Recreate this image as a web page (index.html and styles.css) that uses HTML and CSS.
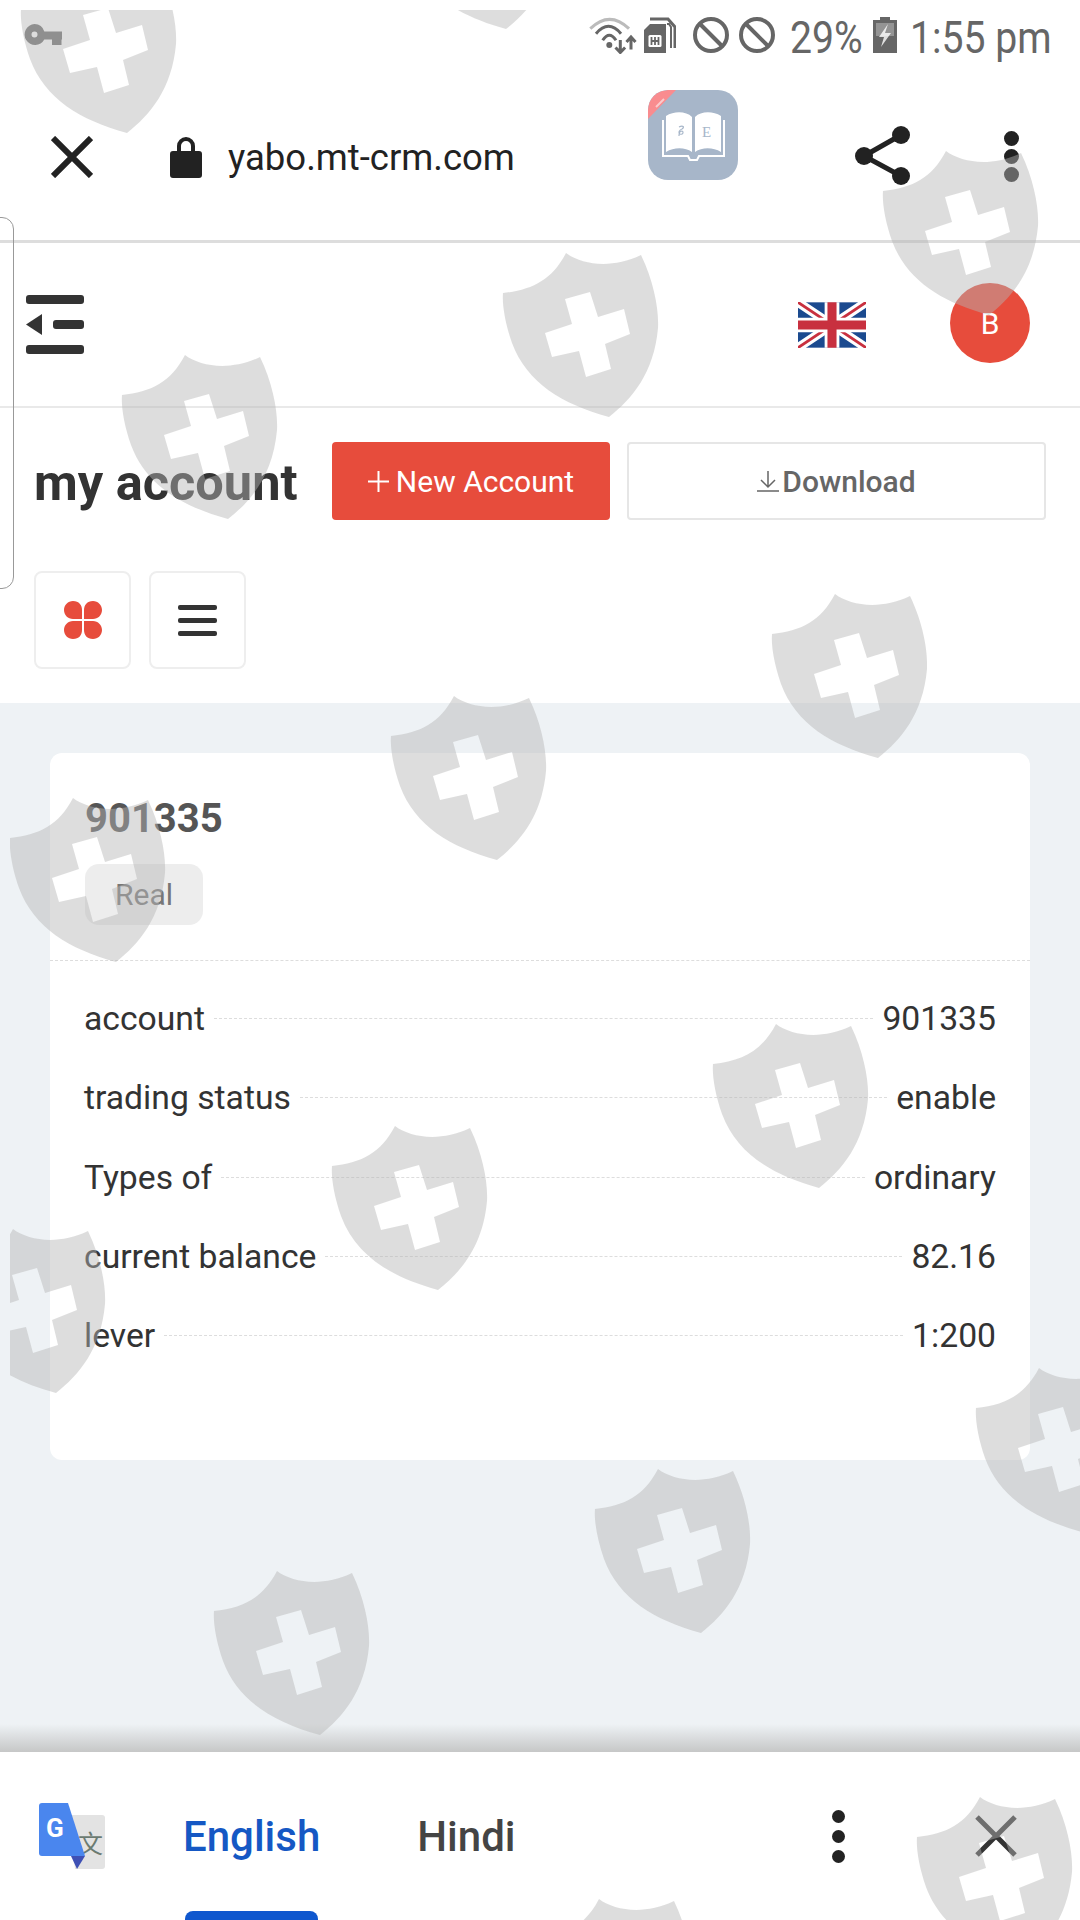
FILE: index.html
```html
<!DOCTYPE html>
<html lang="en">
<head>
    <meta charset="UTF-8">
    <meta name="viewport" content="width=device-width, initial-scale=1.0">
    <title>my account</title>
    <link rel="stylesheet" href="styles.css">
</head>
<body>
    <div class="phone">
        <!-- Android status bar -->
        <div class="status-bar">
            <svg class="key-icon" viewBox="0 0 38 21"><path fill="#707070" fill-rule="evenodd" d="M10.500 0a10.500 10.500 0 0 1 9.800 7.500H38v8h-.5V21H28v-5.500h-7.700A10.500 10.500 0 1 1 10.500 0zm0 7.500a3 3 0 1 0 0 6 3 3 0 0 0 0-6z"/></svg>
            <div class="status-right">
                <svg class="wifi-icon" viewBox="0 0 48 37" fill="none">
                    <path stroke="#bbb" stroke-width="3" d="M1.300 11.700Q20.600-7 40 11.700"/>
                    <path stroke="#666" stroke-width="3" d="M7 16.700Q19.500 2 32 16.700M13.700 23.300Q20.300 13 27 23.300"/>
                    <circle cx="20.300" cy="28" r="3" fill="#666"/>
                    <path stroke="#666" stroke-width="3" d="M31.300 23v12M26.500 30.500l4.800 5 4.800-5M42 32.500V20M37.500 25l4.500-5 4.500 5"/>
                </svg>
                <svg class="sim-icon" viewBox="0 0 33 36">
                    <path fill="#666" d="M7 7h16v29H1V13z"/>
                    <path fill="none" stroke="#666" stroke-width="3" d="M7 2h18l7 8v21"/>
                    <path fill="none" stroke="#666" stroke-width="2" d="M24 7h2l2 3v21"/>
                    <rect x="5.500" y="18" width="13" height="12" rx="1.500" fill="#fff"/>
                    <path stroke="#666" stroke-width="1.800" d="M8.500 20v8M15.500 20v8M8.500 24h7M12 20v8"/>
                </svg>
                <svg class="block-icon" viewBox="0 0 36 36" fill="none" stroke="#666" stroke-width="4"><circle cx="18" cy="18" r="16"/><path d="M7 7l22 22"/></svg>
                <svg class="block-icon block-last" viewBox="0 0 36 36" fill="none" stroke="#666" stroke-width="4"><circle cx="18" cy="18" r="16"/><path d="M7 7l22 22"/></svg>
                <span class="status-text status-pct"><span>29%</span></span>
                <svg class="battery-icon" viewBox="0 0 24 36">
                    <path fill="#666" d="M7 0h10v3h7v33H0V3h7z"/>
                    <path fill="#fff" opacity=".3" d="M3 6h18v13H3z"/>
                    <path fill="#fff" opacity=".8" d="M15 7L6 20h5l-3 10 10-14h-6z"/>
                </svg>
                <span class="status-text status-time"><span>1:55 pm</span></span>
            </div>
        </div>

        <!-- custom tab toolbar -->
        <div class="toolbar">
            <svg class="close-icon" viewBox="0 0 42 42" fill="none" stroke="#222" stroke-width="6"><path d="M2 2l38 38M40 2L2 40"/></svg>
            <svg class="lock-icon" viewBox="0 0 32 42"><path fill="#222" d="M7 15V10a9 9 0 0 1 18 0v5h4a3 3 0 0 1 3 3v21a3 3 0 0 1-3 3H3a3 3 0 0 1-3-3V18a3 3 0 0 1 3-3zm4 0h10V10a5 5 0 0 0-10 0z"/></svg>
            <span class="url">yabo.mt-crm.com</span>
            <svg class="dict-icon" viewBox="0 0 90 90">
                <path fill="#f98c8f" d="M0 29V20A20 20 0 0 1 20 0h8z"/>
                <path stroke="#fff" stroke-width="2" opacity=".55" d="M8 17l8-8"/>
                <path fill="#fff" d="M18 26c8-5 20-5 26 1v35c-7-5-18-5-26 0zM47 27c6-6 18-6 26-1v36c-8-5-19-5-26 0z"/>
                <path fill="none" stroke="#fff" stroke-width="2" d="M15 30v36h25l2 4h7l2-4h25V30"/>
                <path fill="none" stroke="#a7b6c9" stroke-width="1.200" d="M31 37c4-2 6 0 3 2-3 1-4 4-2 5 3 1 4-2 2-3-2 0-3 2-3 5"/>
                <text x="54" y="47" class="dict-letter">E</text>
            </svg>
            <svg class="share-icon" viewBox="0 0 55 59"><path fill="none" stroke="#222" stroke-width="5" d="M46 9L9 30l37 20"/><circle cx="46" cy="9" r="9" fill="#222"/><circle cx="9" cy="30" r="9" fill="#222"/><circle cx="46" cy="50" r="9" fill="#222"/></svg>
            <div class="dots dots-big"><i></i><i></i><i></i></div>
        </div>

        <!-- site -->
        <div class="site">
            <div class="drawer-tab"></div>
            <div class="site-header">
                <svg class="back-menu" viewBox="0 0 58 60" fill="#333">
                    <rect x="0" y="0" width="58" height="9" rx="3"/>
                    <rect x="27" y="25" width="31" height="9" rx="3"/>
                    <path d="M16 19v21L0 29.500z"/>
                    <rect x="0" y="50" width="58" height="9" rx="3"/>
                </svg>
                <svg class="flag" viewBox="0 0 60 40">
                    <rect width="60" height="40" fill="#1b4a8f"/>
                    <path stroke="#fff" stroke-width="8" d="M0 0l60 40M60 0L0 40"/>
                    <path stroke="#c8303f" stroke-width="2.500" d="M0 0l60 40M60 0L0 40"/>
                    <path stroke="#fff" stroke-width="13" d="M30 0v40M0 20h60"/>
                    <path stroke="#c8303f" stroke-width="8" d="M30 0v40M0 20h60"/>
                </svg>
                <div class="avatar">B</div>
            </div>
            <div class="title-row">
                <h1>my account</h1>
                <button class="btn btn-red">
                    <svg class="plus-icon" viewBox="0 0 21 21" fill="none" stroke="#fff" stroke-width="2"><path d="M10.500 0v21M0 10.500h21"/></svg>New Account
                </button>
                <button class="btn btn-plain">
                    <svg class="dl-icon" viewBox="0 0 22 22" fill="none" stroke="#666" stroke-width="1.500"><path d="M11 1v15M4 10l7 7 7-7M0 21h22"/></svg>Download
                </button>
            </div>
            <div class="view-row">
                <div class="view-btn">
                    <svg class="grid-icon" viewBox="0 0 38 38" fill="#e74c3c">
                        <path d="M9 0c6 0 9 4 9 9v9H9c-5 0-9-4-9-9s4-9 9-9zM29 0c5 0 9 4 9 9s-4 9-9 9h-9V9c0-5 3-9 9-9zM9 38c-5 0-9-4-9-9s4-9 9-9h9v9c0 5-3 9-9 9zM29 38c-6 0-9-4-9-9v-9h9c5 0 9 4 9 9s-4 9-9 9z"/>
                    </svg>
                </div>
                <div class="view-btn">
                    <div class="list-icon"><i></i><i></i><i></i></div>
                </div>
            </div>
            <div class="content">
                <div class="card">
                    <div class="card-head">
                        <h2>901335</h2>
                        <span class="badge">Real</span>
                    </div>
                    <div class="card-body">
                        <div class="row"><span>account</span><em></em><span>901335</span></div>
                        <div class="row"><span>trading status</span><em></em><span>enable</span></div>
                        <div class="row"><span>Types of</span><em></em><span>ordinary</span></div>
                        <div class="row"><span>current balance</span><em></em><span>82.16</span></div>
                        <div class="row"><span>lever</span><em></em><span>1:200</span></div>
                    </div>
                </div>
            </div>
        </div>

        <!-- translate bar -->
        <div class="translate-bar">
            <svg class="gt-logo" viewBox="0 0 66 66">
                <path fill="#e3e3e3" d="M30 12h33a3 3 0 0 1 3 3v48a3 3 0 0 1-3 3H36z"/>
                <text x="39" y="50" class="gt-zi">文</text>
                <path fill="#3f51b5" d="M32 53h14l-8 13z"/>
                <path fill="#4a86ee" d="M3 0h26l17 53H3a3 3 0 0 1-3-3V3a3 3 0 0 1 3-3z"/>
                <text x="7" y="34" class="gt-g">G</text>
            </svg>
            <span class="lang lang-on">English<b class="lang-mark"></b></span>
            <span class="lang">Hindi</span>
            <div class="translate-right">
                <div class="dots"><i></i><i></i><i></i></div>
                <svg class="bar-close" viewBox="0 0 42 42" fill="none" stroke="#333" stroke-width="5"><path d="M2 2l38 38M40 2L2 40"/></svg>
            </div>
        </div>

        <!-- watermark laid over the whole page -->
        <svg class="watermark" viewBox="10 10 1070 1910">
            <defs>
                <path id="shield" fill-rule="evenodd" d="M64 1C80 13 110 17 139 3C152 30 157 58 156 76C152 121 130 147 107 165C60 152 25 131 10 91C3 71 0 52 1 41C30 38 50 28 64 1ZM63 47L88 40L96 65L122 57L128 82L103 92L109 117L84 125L77 99L50 105L43 81L70 72Z"/>
            </defs>
            <use href="#shield" x="20" y="-32"/>
            <use href="#shield" x="399" y="-136"/>
            <use href="#shield" x="882" y="150"/>
            <use href="#shield" x="502" y="252"/>
            <use href="#shield" x="121" y="354"/>
            <use href="#shield" x="771" y="593"/>
            <use href="#shield" x="390" y="695"/>
            <use href="#shield" x="9" y="797"/>
            <use href="#shield" x="712" y="1023"/>
            <use href="#shield" x="331" y="1125"/>
            <use href="#shield" x="-51" y="1228"/>
            <use href="#shield" x="975" y="1367"/>
            <use href="#shield" x="594" y="1468"/>
            <use href="#shield" x="213" y="1570"/>
            <use href="#shield" x="916" y="1796"/>
            <use href="#shield" x="535" y="1898"/>
        </svg>
    </div>
</body>
</html>
```

FILE: styles.css
```css
* {
    box-sizing: border-box;
}

html,
body {
    margin: 0;
    padding: 0;
    background: #ffffff;
}

body {
    font-family: Roboto, "Liberation Sans", sans-serif;
    color: #333333;
}

.phone {
    position: relative;
    width: 1080px;
    height: 1920px;
    overflow: hidden;
    display: flex;
    flex-direction: column;
}

/* status bar */
.status-bar {
    height: 70px;
    padding: 10px 30px 0 24px;
    display: flex;
    justify-content: space-between;
    align-items: flex-start;
    flex-shrink: 0;
}

.key-icon {
    width: 38px;
    height: 21px;
    margin-top: 14px;
}

.status-right {
    display: flex;
    align-items: center;
    height: 50px;
}

.wifi-icon {
    width: 48px;
    height: 37px;
    margin-right: 6px;
}

.sim-icon {
    width: 33px;
    height: 36px;
    margin-right: 17px;
}

.block-icon {
    width: 36px;
    height: 36px;
    margin-right: 10px;
}

.block-last {
    margin-right: 15px;
}

.battery-icon {
    width: 24px;
    height: 36px;
    margin: 0 13px;
}

/* no condensed Roboto here, so the text is squeezed */
.status-text {
    display: block;
    font-size: 45px;
    line-height: 50px;
    color: #666666;
    white-space: nowrap;
    position: relative;
    top: 3px;
}

.status-text span {
    display: inline-block;
    transform: scaleX(0.87);
    transform-origin: left center;
}

.status-pct {
    width: 70px;
}

.status-time {
    width: 140px;
}

/* toolbar */
.toolbar {
    height: 173px;
    padding: 3px 0 0 51px;
    display: flex;
    align-items: center;
    border-bottom: 3px solid #dddddd;
    flex-shrink: 0;
}

.close-icon {
    width: 42px;
    height: 42px;
}

.lock-icon {
    width: 32px;
    height: 42px;
    margin: 0 26px 0 77px;
}

.url {
    font-size: 36.500px;
    color: #222222;
    margin-top: 1px;
    width: 420px;
}

.dict-icon {
    width: 90px;
    height: 90px;
    margin-top: -43px;
    border-radius: 20px;
    background: #a7b6c9;
}

.dict-letter {
    font-family: "Liberation Serif", serif;
    font-size: 15px;
    fill: #a7b6c9;
}

.share-icon {
    width: 55px;
    height: 59px;
    margin: -2px 0 0 117px;
}

.dots {
    display: flex;
    flex-direction: column;
    gap: 7px;
}

.dots i {
    display: block;
    width: 13px;
    height: 13px;
    border-radius: 50%;
    background: #222222;
}

.dots-big {
    gap: 3px;
    margin-left: 94px;
}

.dots-big i {
    width: 15px;
    height: 15px;
}

/* site */
.site {
    flex: 1;
    position: relative;
    display: flex;
    flex-direction: column;
    min-height: 0;
}

.drawer-tab {
    position: absolute;
    left: -10px;
    top: -26px;
    width: 24px;
    height: 372px;
    border: 1px solid #999999;
    border-radius: 0 12px 12px 0;
}

.site-header {
    height: 165px;
    padding: 0 50px 0 26px;
    display: flex;
    align-items: center;
    border-bottom: 2px solid #e9e9e9;
    flex-shrink: 0;
}

.back-menu {
    width: 58px;
    height: 60px;
}

.flag {
    width: 68px;
    height: 46px;
    margin-left: auto;
}

.avatar {
    width: 80px;
    height: 80px;
    margin: -3px 0 0 84px;
    border-radius: 50%;
    background: #e74c3c;
    color: #ffffff;
    font-size: 30px;
    display: flex;
    justify-content: center;
    align-items: center;
}

.title-row {
    display: flex;
    align-items: center;
    padding: 34px 34px 0;
    height: 112px;
    flex-shrink: 0;
}

h1 {
    margin: 2px 0 0;
    width: 298px;
    font-size: 50.500px;
    font-weight: 700;
    color: #333333;
    white-space: nowrap;
}

.btn {
    height: 78px;
    font-family: Roboto, sans-serif;
    font-size: 30px;
    border-radius: 4px;
    display: flex;
    justify-content: center;
    align-items: center;
}

.btn-red {
    width: 278px;
    background: #e74c3c;
    border: none;
    color: #ffffff;
}

.plus-icon {
    width: 21px;
    height: 21px;
    margin-right: 7px;
}

.btn-plain {
    width: 419px;
    margin-left: 17px;
    background: transparent;
    border: 2px solid #e6e6e6;
    color: #666666;
    font-weight: 500;
}

.dl-icon {
    width: 22px;
    height: 22px;
    margin-right: 3px;
}

.view-row {
    display: flex;
    gap: 18px;
    padding: 51px 34px 34px;
    flex-shrink: 0;
}

.view-btn {
    width: 97px;
    height: 98px;
    border: 2px solid #eeeeee;
    border-radius: 8px;
    display: flex;
    justify-content: center;
    align-items: center;
}

.grid-icon {
    width: 38px;
    height: 38px;
}

.list-icon {
    width: 39px;
    display: flex;
    flex-direction: column;
    gap: 8px;
}

.list-icon i {
    display: block;
    height: 5px;
    border-radius: 2px;
    background: #333333;
}

.content {
    flex: 1;
    background: #eef2f5;
    padding: 50px 50px 0;
    position: relative;
}

.content::after {
    content: "";
    position: absolute;
    left: 0;
    right: 0;
    bottom: 0;
    height: 28px;
    background: linear-gradient(rgba(195, 196, 197, 0), #c6c7c7);
}

.card {
    background: #ffffff;
    border-radius: 12px;
    height: 707px;
}

.card-head {
    height: 208px;
    padding: 42px 35px 0;
    border-bottom: 1px dashed #dddddd;
}

h2 {
    margin: 0 0 22px;
    font-size: 40px;
    line-height: 47px;
    font-weight: 700;
    color: #555555;
}

.badge {
    display: inline-flex;
    align-items: center;
    justify-content: center;
    width: 118px;
    height: 61px;
    border-radius: 14px;
    background: rgba(220, 220, 220, 0.5);
    color: #777777;
    font-size: 30px;
}

.card-body {
    padding: 18px 34px 0;
}

.row {
    height: 79.300px;
    display: flex;
    align-items: center;
    font-size: 33.700px;
    color: #333333;
}

.row em {
    flex: 1;
    margin: 0 9px;
    border-top: 1px dashed #dddddd;
}

/* translate bar */
.translate-bar {
    height: 168px;
    background: #ffffff;
    padding: 0 63px 0 39px;
    display: flex;
    align-items: center;
    flex-shrink: 0;
}

.gt-logo {
    width: 66px;
    height: 66px;
    margin-right: 78px;
}

.gt-g {
    font-family: Roboto, sans-serif;
    font-size: 26px;
    font-weight: 700;
    fill: #ffffff;
}

.gt-zi {
    font-family: "Noto Sans CJK SC", sans-serif;
    font-size: 25px;
    fill: #6b7b72;
}

.lang {
    position: relative;
    margin-right: 97px;
    font-size: 42px;
    font-weight: 500;
    color: #444444;
}

.lang-on {
    color: #1558c4;
}

.lang-mark {
    position: absolute;
    left: 2px;
    right: 2px;
    top: 99px;
    height: 12px;
    border-radius: 8px 8px 0 0;
    background: #0f57ce;
}

.translate-right {
    margin-left: auto;
    display: flex;
    align-items: center;
    gap: 130px;
}

.bar-close {
    width: 42px;
    height: 42px;
}

/* watermark */
.watermark {
    position: absolute;
    left: 10px;
    top: 10px;
    width: 1070px;
    height: 1910px;
    fill: rgba(180, 180, 180, 0.46);
    pointer-events: none;
}
```
